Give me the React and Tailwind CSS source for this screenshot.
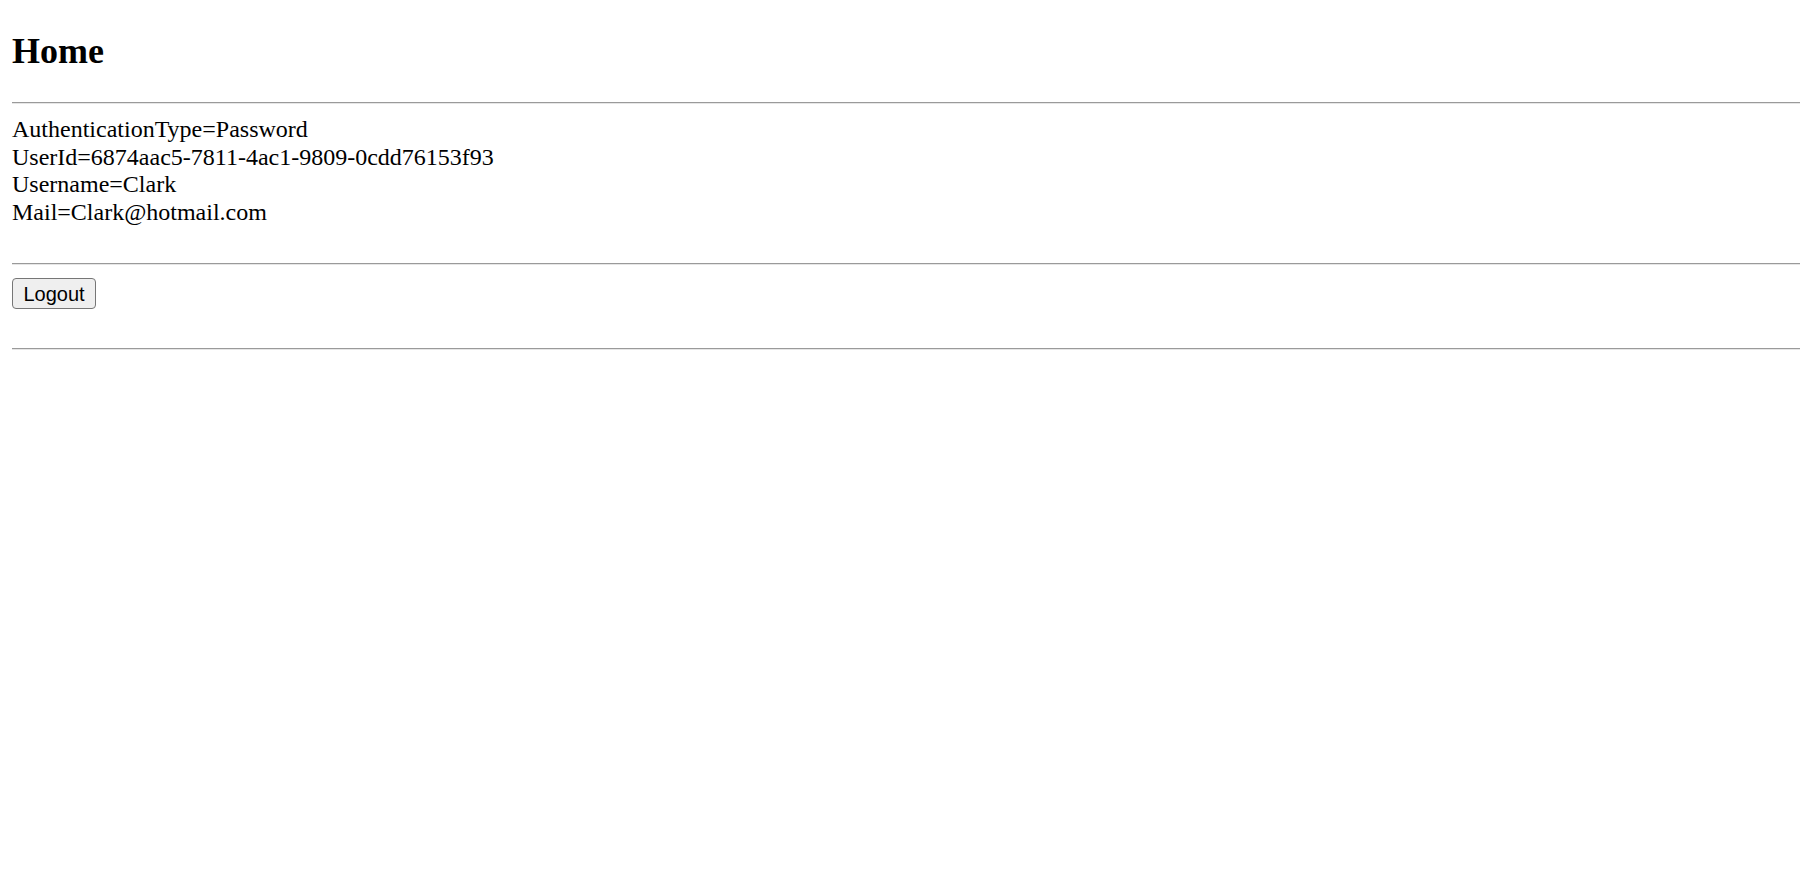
export default function App() {
  return (
    <div className="min-h-screen bg-white px-3 pt-[31px] font-['Liberation_Serif',serif] text-black">
      {/* Title */}
      <h1 className="text-[36px] leading-[41px] font-bold">Home</h1>
      <hr className="mt-[30px] h-[2px] border-0 border-t border-t-[#9a9a9a] border-b border-b-[#e6e6e6]" />

      {/* Claims */}
      <div className="mt-[12px] text-[24px] leading-[27.6px]">
        <div>AuthenticationType=Password</div>
        <div>UserId=6874aac5-7811-4ac1-9809-0cdd76153f93</div>
        <div>Username=Clark</div>
        <div>Mail=Clark@hotmail.com</div>
      </div>
      <hr className="mt-[37px] h-[2px] border-0 border-t border-t-[#9a9a9a] border-b border-b-[#e6e6e6]" />

      {/* Actions */}
      <div className="mt-[13px]">
        <button className="flex h-[31px] w-[84px] items-center justify-center rounded-[4px] border border-[#767676] bg-[#efefef] font-['Liberation_Sans',Arial,sans-serif] text-[20px] leading-none text-black">
          Logout
        </button>
      </div>
      <hr className="mt-[39px] h-[2px] border-0 border-t border-t-[#9a9a9a] border-b border-b-[#e6e6e6]" />
    </div>
  );
}
